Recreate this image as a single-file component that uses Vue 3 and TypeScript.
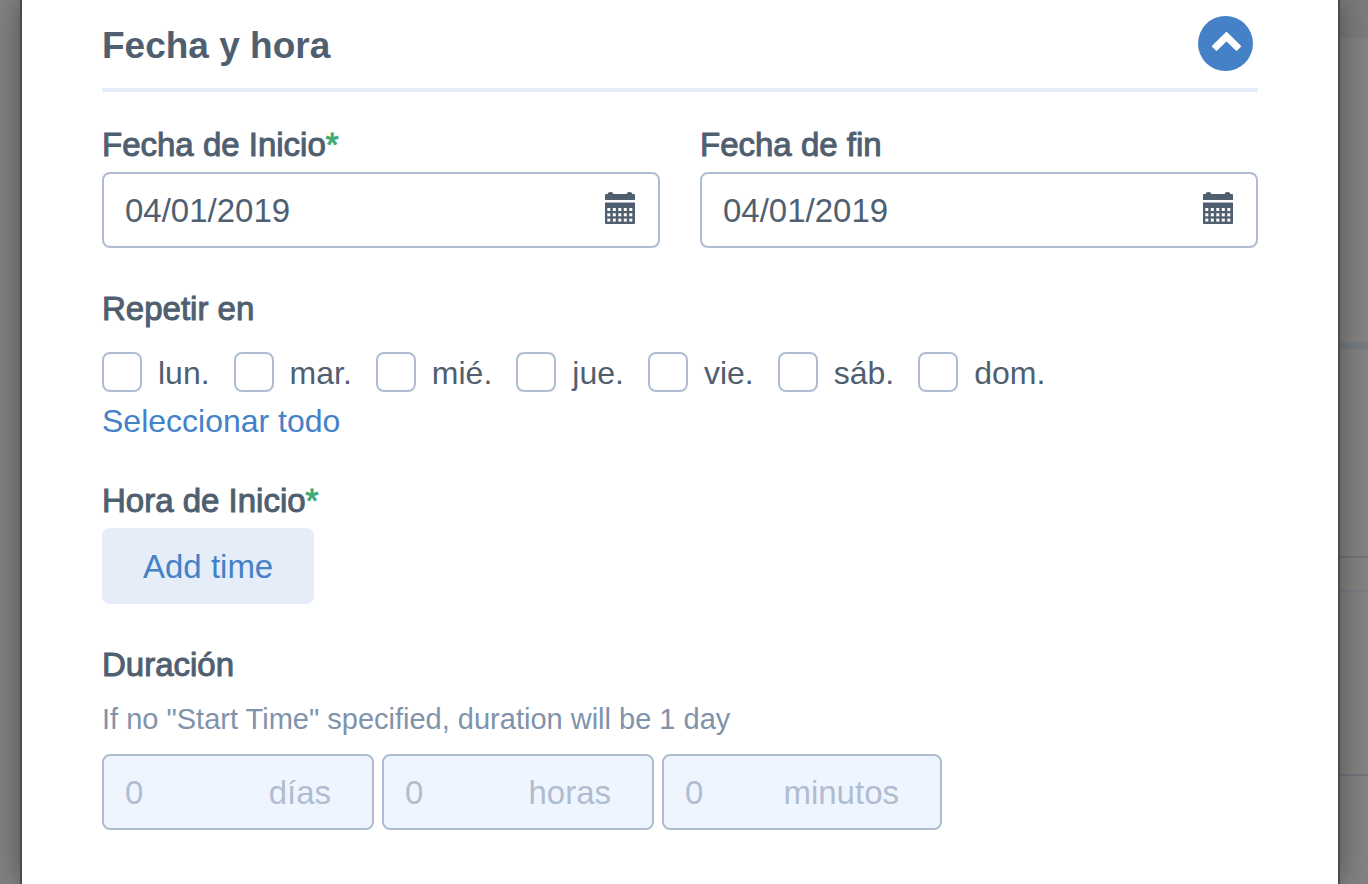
<script setup lang="ts">
import { ref, computed } from 'vue'

interface Day { id: string; label: string; checked: boolean }
interface Unit { id: string; label: string; value: string }

const open = ref(true)
const dates = ref([
  { id: 'start', label: 'Fecha de Inicio', required: true, value: '04/01/2019' },
  { id: 'end', label: 'Fecha de fin', required: false, value: '04/01/2019' },
])
const days = ref<Day[]>(
  ['lun.', 'mar.', 'mié.', 'jue.', 'vie.', 'sáb.', 'dom.'].map((label, i) => ({
    id: `day-${i}`,
    label,
    checked: false,
  })),
)
const units: Unit[] = [
  { id: 'duration-days', label: 'días', value: '0' },
  { id: 'duration-hours', label: 'horas', value: '0' },
  { id: 'duration-minutes', label: 'minutos', value: '0' },
]
const allChecked = computed(() => days.value.every((d) => d.checked))
function toggleAll(): void {
  const next = !allChecked.value
  days.value.forEach((d) => { d.checked = next })
}
const cellX = [2.3, 7.8, 13.3, 18.8, 24.3]
const cellY = [16, 21.3, 26.6]
</script>

<template>
  <div class="page">
    <div class="backdrop" aria-hidden="true">
      <div class="band band-top"></div>
      <div class="band band-head"></div>
      <div class="band band-mid"></div>
      <div class="band band-row"></div>
      <div class="band band-list"></div>
    </div>

    <main class="modal">
      <header class="head">
        <h2>Fecha y hora</h2>
        <button class="toggle" type="button" aria-label="Fecha y hora" :aria-expanded="open" @click="open = !open">
          <svg viewBox="0 0 55 55" aria-hidden="true">
            <path d="M28.5 17 42 30.2 38.5 33.7 28.5 24 18.5 33.7 15 30.2Z" fill="#fff" stroke="#fff" stroke-width="2" stroke-linejoin="round" />
          </svg>
        </button>
      </header>

      <form v-if="open" class="body" @submit.prevent>
        <div class="dates">
          <div v-for="d in dates" :key="d.id">
            <label class="label" :for="d.id">{{ d.label }}<span v-if="d.required" class="req">*</span></label>
            <div class="box">
              <input :id="d.id" v-model="d.value" type="text" />
              <svg class="cal" viewBox="0 0 30 32" aria-hidden="true">
                <path d="M0 8V3Q0 2 1 2H2.500L3.500 0.500Q4 0 5 0H6Q7 0 7.500 0.500L8.500 2H21.500L22.500 0.500Q23 0 24 0H25Q26 0 26.500 0.500L27.500 2H29Q30 2 30 3V8Z" />
                <path d="M0 10.500H30V31Q30 32 29 32H1Q0 32 0 31Z" />
                <template v-for="y in cellY" :key="y">
                  <rect v-for="x in cellX" :key="x" :x="x" :y="y" width="3" height="3" fill="#fff" />
                </template>
              </svg>
            </div>
          </div>
        </div>

        <fieldset class="group">
          <legend class="label">Repetir en</legend>
          <div class="days">
            <label v-for="day in days" :key="day.id" class="day" :for="day.id">
              <input :id="day.id" v-model="day.checked" type="checkbox" />
              <span>{{ day.label }}</span>
            </label>
          </div>
          <a class="all" href="#" @click.prevent="toggleAll">Seleccionar todo</a>
        </fieldset>

        <div class="group">
          <div id="time-label" class="label">Hora de Inicio<span class="req">*</span></div>
          <button class="add" type="button" aria-describedby="time-label">Add time</button>
        </div>

        <fieldset class="group">
          <legend class="label">Duración</legend>
          <p class="help">If no "Start Time" specified, duration will be 1 day</p>
          <div class="units">
            <div v-for="u in units" :key="u.id" class="box unit">
              <input :id="u.id" type="text" inputmode="numeric" :value="u.value" disabled />
              <label :for="u.id">{{ u.label }}</label>
            </div>
          </div>
        </fieldset>
      </form>
    </main>
  </div>
</template>

<style>
body {
  margin: 0;
  background: #828282;
}
</style>

<style scoped>
* {
  box-sizing: border-box;
}
.page {
  position: relative;
  display: flex;
  min-height: 100vh;
  padding: 0 30px 0 22px;
  overflow: hidden;
  background: #828282;
  color: #505f70;
  font: 33px/40px "Liberation Sans", Arial, sans-serif;
}
.backdrop {
  position: absolute;
  inset: 0 0 0 50%;
}
.band-top {
  height: 38px;
  background: #7b7b7b;
}
.band-head {
  height: 311px;
  border-bottom: 7px solid #757c82;
}
.band-mid {
  height: 209px;
  border-bottom: 2px solid #747474;
}
.band-row {
  height: 34px;
  border-bottom: 2px solid #777d84;
}
.band-list {
  height: 184px;
  border-bottom: 2px solid #71767c;
}
.modal {
  position: relative;
  flex: 1;
  min-width: 0;
  padding: 0 80px 54px;
  background: #fff;
  box-shadow: 0 0 0 2px #4b4b4b, 0 0 28px rgba(0, 0, 0, 0.45);
}
.head {
  display: flex;
  align-items: center;
  justify-content: space-between;
  height: 92px;
  padding-right: 5px;
  border-bottom: 4px solid #e5edf8;
}
h2 {
  margin: 0;
  padding-top: 4px;
  font-size: 37px;
  line-height: 48px;
  font-weight: 700;
}
.toggle {
  width: 55px;
  height: 55px;
  margin-bottom: 2px;
  padding: 0;
  border: 0;
  border-radius: 50%;
  background: #4481c7;
  cursor: pointer;
}
.toggle svg {
  display: block;
  width: 100%;
}
.body {
  padding-top: 26px;
}
.label {
  display: block;
  padding: 0;
  line-height: 54px;
  -webkit-text-stroke: 1px currentColor;
}
.req {
  color: #3fab77;
}
.dates {
  display: grid;
  grid-template-columns: 1fr 1fr;
  gap: 40px;
}
.box {
  display: flex;
  align-items: center;
  height: 76px;
  padding: 0 23px 0 21px;
  border: 2px solid #b0bdd1;
  border-radius: 8px;
}
.box input {
  flex: 1;
  width: 0;
  min-width: 0;
  height: 72px;
  padding: 2px 0 0;
  border: 0;
  outline: 0;
  background: transparent;
  color: inherit;
  font: inherit;
}
.cal {
  width: 30px;
  height: 32px;
  margin-bottom: 4px;
  fill: #505f70;
}
.group {
  min-width: 0;
  margin: 34px 0 0;
  padding: 0;
  border: 0;
}
.days {
  display: flex;
  flex-wrap: wrap;
  gap: 8px 24px;
  padding-top: 16px;
  font-size: 32px;
}
.day {
  display: flex;
  align-items: center;
  gap: 16px;
  height: 40px;
}
.day span {
  padding-top: 2px;
}
.day input {
  appearance: none;
  width: 40px;
  height: 40px;
  margin: 0;
  border: 2px solid #b0bdd1;
  border-radius: 8px;
  background: #fff;
}
.day input:checked {
  background: #4481c7;
}
.all {
  display: table;
  margin-top: 8px;
  padding-top: 1px;
  margin-bottom: -1px;
  color: #4481c7;
  font-size: 32px;
  text-decoration: none;
}
.add {
  display: block;
  height: 76px;
  padding: 2px 41px 0;
  border: 0;
  border-radius: 8px;
  background: #e5edf8;
  color: #4481c7;
  font: inherit;
  cursor: pointer;
}
.help {
  margin: 9px 0 17px;
  color: #8093ab;
  font-size: 29px;
  line-height: 36px;
}
.units {
  display: flex;
  flex-wrap: wrap;
  gap: 8px;
}
.unit {
  width: 272px;
  padding-right: 41px;
  background: #eff5fe;
  color: #b0bdd1;
}
.unit:last-child {
  width: 280px;
}
.unit label {
  padding-top: 2px;
}
</style>
